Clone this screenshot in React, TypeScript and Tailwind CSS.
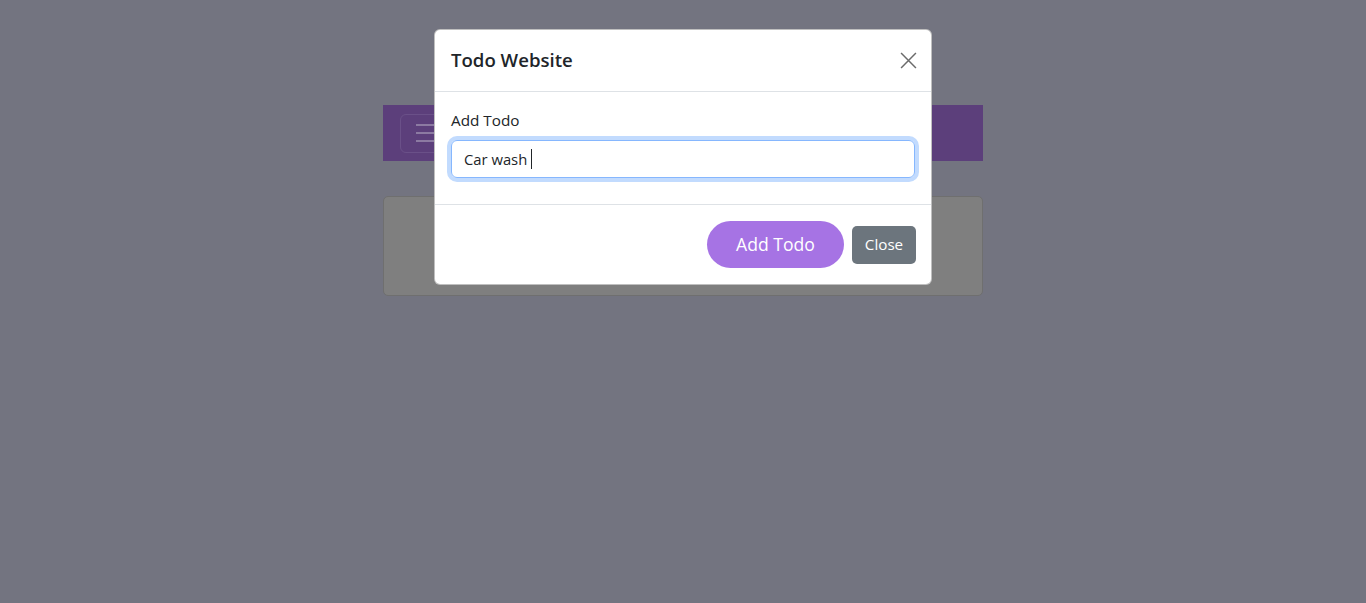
import React from "react";

export default function App() {
  return (
    <div
      className="relative w-[1366px] h-[603px] bg-[#737480] overflow-hidden"
      style={{ fontFamily: '"Open Sans", "Noto Sans", sans-serif' }}
    >
      {/* page content under backdrop */}
      <div className="w-[600px] mx-auto pt-[105px] flex flex-col gap-[35px]">
        <div className="h-[56px] bg-[#5c3f7b] flex items-center px-[17px]">
          <div className="w-[48px] h-[39px] border border-[#6a5088] rounded-[6px] flex flex-col justify-center gap-[6px] pl-[15px]">
            <div className="h-[2px] w-[26px] bg-[#8c7aa2]" />
            <div className="h-[2px] w-[26px] bg-[#8c7aa2]" />
            <div className="h-[2px] w-[26px] bg-[#8c7aa2]" />
          </div>
        </div>
        <div className="h-[100px] bg-[#7f7f7f] border border-[#6f6f6f] rounded-[5px]" />
      </div>

      {/* modal */}
      <div className="absolute left-[434px] top-[29px] w-[498px] bg-white rounded-[6px] border border-[#5f5f5f]/40">
        <div className="h-[62px] flex items-center justify-between pl-[16px] pr-[14px] border-b border-[#dee2e6]">
          <h5 className="text-[18.6px] font-semibold text-[#212529] leading-none">Todo Website</h5>
          <svg width="17" height="17" viewBox="0 0 16 16">
            <path d="M1 1 L15 15 M15 1 L1 15" stroke="#6b6b6b" strokeWidth="1.4" />
          </svg>
        </div>
        <div className="px-[16px] pt-[16px] pb-[26px]">
          <label className="block text-[15.3px] text-[#212529] mb-[8px] leading-[24px]">Add Todo</label>
          <div className="h-[38px] rounded-[6px] border border-[#86b7fe] ring-4 ring-[#c2dbfe] flex items-center px-[12px] text-[14.8px] text-[#212529]">
            Car wash
            <span className="ml-[4px] inline-block w-[1px] h-[20px] bg-[#212529]" />
          </div>
        </div>
        <div className="border-t border-[#dee2e6] h-[80px] flex items-center justify-end px-[15px] gap-[8px]">
          <button className="h-[47px] w-[137px] rounded-full bg-[#a673e4] text-white text-[17.6px]">Add Todo</button>
          <button className="h-[38px] w-[64px] rounded-[5px] bg-[#6c757d] text-white text-[15.2px]">Close</button>
        </div>
      </div>
    </div>
  );
}
